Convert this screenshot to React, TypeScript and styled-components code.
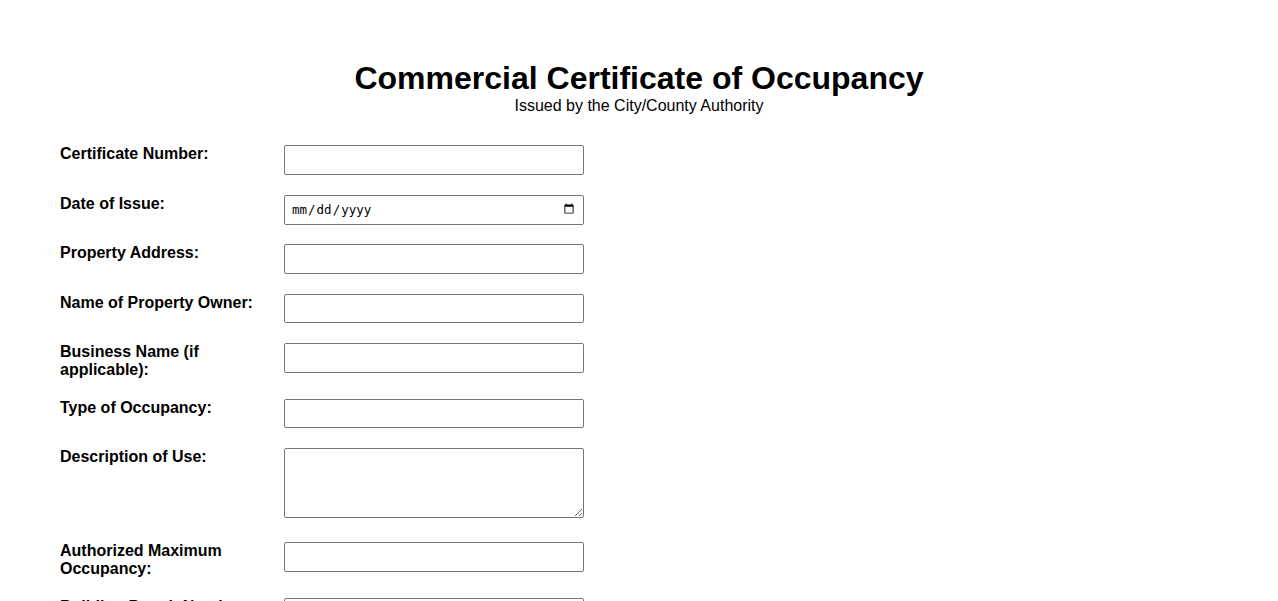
import React from 'react'
import styled, { createGlobalStyle } from 'styled-components'

const GlobalStyle = createGlobalStyle`
  html, body {
    margin: 0;
    padding: 0;
    background: #ffffff;
  }
  body {
    font-family: "Liberation Sans", Arial, sans-serif;
    color: #000000;
  }
`

type Field = {
  label: string
  kind: 'text' | 'date' | 'area'
}

const fields: Field[] = [
  { label: 'Certificate Number:', kind: 'text' },
  { label: 'Date of Issue:', kind: 'date' },
  { label: 'Property Address:', kind: 'text' },
  { label: 'Name of Property Owner:', kind: 'text' },
  { label: 'Business Name (if applicable):', kind: 'text' },
  { label: 'Type of Occupancy:', kind: 'text' },
  { label: 'Description of Use:', kind: 'area' },
  { label: 'Authorized Maximum Occupancy:', kind: 'text' },
  { label: 'Building Permit Number:', kind: 'text' },
  { label: 'Inspection Date:', kind: 'date' },
]

const App: React.FC = () => {
  return (
    <>
      <GlobalStyle />
      <Page>
        <Header>
          <Title>Commercial Certificate of Occupancy</Title>
          <Subtitle>Issued by the City/County Authority</Subtitle>
        </Header>
        <Form>
          {fields.map((f, i) => (
            <Row key={i} $tall={f.kind === 'area'}>
              <Label htmlFor={`f${i}`}>{f.label}</Label>
              {f.kind === 'area' ? (
                <TextArea id={`f${i}`} />
              ) : f.kind === 'date' ? (
                <DateInput id={`f${i}`} type="date" />
              ) : (
                <TextInput id={`f${i}`} type="text" />
              )}
            </Row>
          ))}
        </Form>
      </Page>
    </>
  )
}

const Page = styled.div`
  padding: 60px 60px 40px 60px;
`

const Header = styled.div`
  text-align: center;
  margin-bottom: 30.4px;
`

const Title = styled.h1`
  font-size: 32px;
  font-weight: bold;
  line-height: 37px;
  margin: 0;
`

const Subtitle = styled.p`
  font-size: 16px;
  line-height: 18px;
  margin: 0;
`

const Form = styled.form`
  display: flex;
  flex-direction: column;
`

const Row = styled.div<{ $tall?: boolean }>`
  display: flex;
  align-items: flex-start;
  margin-bottom: ${p => (p.$tall ? '24px' : '19.8px')};
`

const Label = styled.label`
  width: 224px;
  flex-shrink: 0;
  font-size: 16px;
  font-weight: bold;
  line-height: 18px;
  padding-right: 20px;
  box-sizing: border-box;
`

const TextInput = styled.input`
  width: 300px;
  height: 29.5px;
  box-sizing: border-box;
  border: 1px solid #767676;
  border-radius: 2px;
  padding: 4px 6px;
  font-size: 14px;
  margin: 0;
`

const DateInput = styled(TextInput)`
  font-family: "DejaVu Sans Mono", monospace;
  font-size: 12.5px;
  height: 30px;
  color: #000;
`

const TextArea = styled.textarea`
  width: 300px;
  height: 70px;
  box-sizing: border-box;
  border: 1px solid #767676;
  border-radius: 2px;
  padding: 4px 6px;
  margin: 0;
  resize: both;
`

export default App
